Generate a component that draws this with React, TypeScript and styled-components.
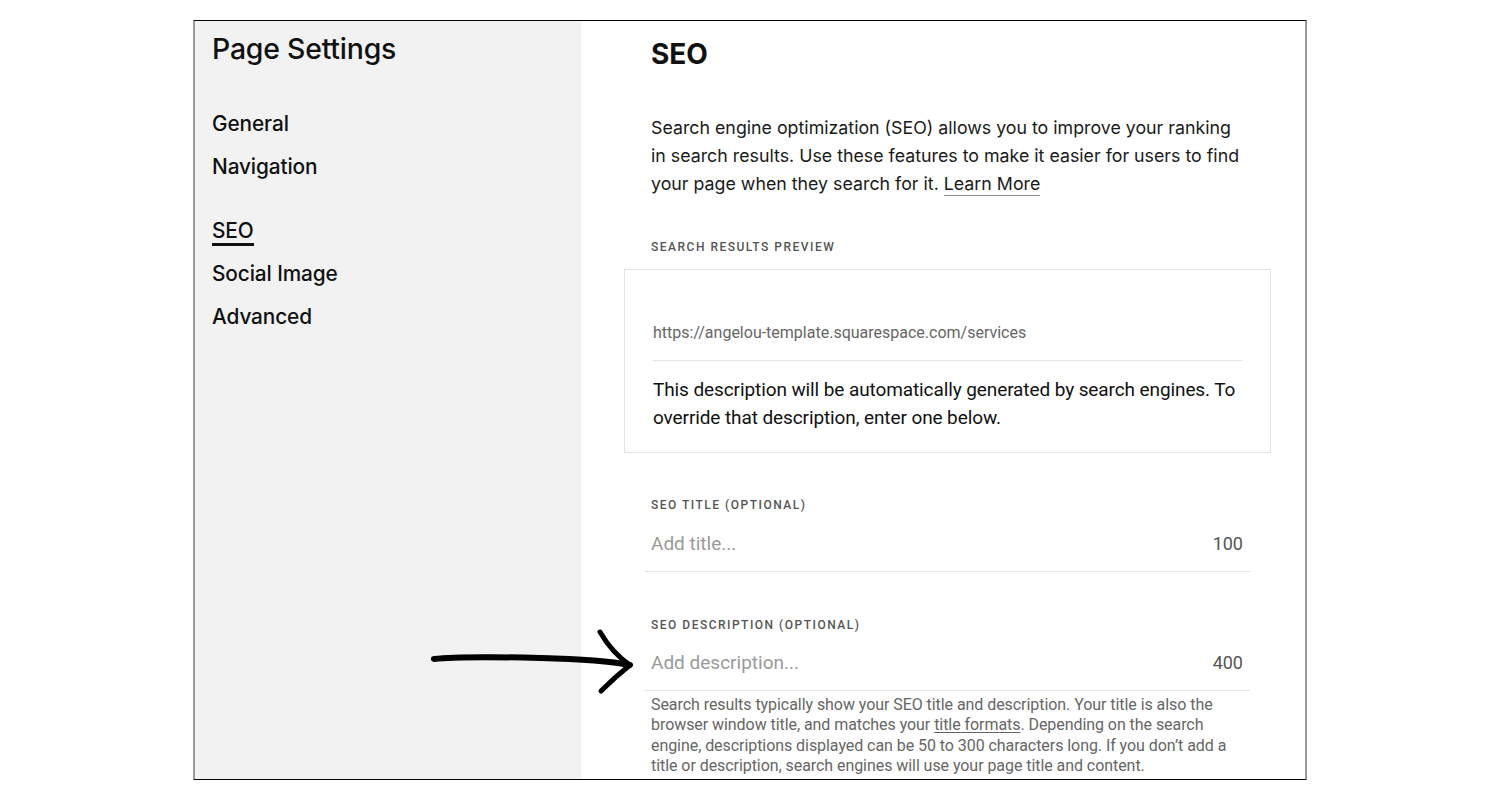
import styled, { createGlobalStyle } from "styled-components";

const GlobalStyle = createGlobalStyle`
  html, body {
    margin: 0;
    padding: 0;
    background: #ffffff;
  }
  body {
    font-family: "Inter", "Liberation Sans", sans-serif;
    color: #111;
  }
`;

const Page = styled.div`
  display: flex;
  padding: 20px 0 0 193px;
`;

const Frame = styled.div`
  position: relative;
  width: 1114px;
  height: 760px;
  box-sizing: border-box;
  border-top: 1px solid #000;
  border-bottom: 1px solid #000;
  border-left: 2px solid #9a9a9a;
  border-right: 2px solid #9a9a9a;
  display: flex;
  overflow: hidden;
`;

const Sidebar = styled.aside`
  width: 386px;
  flex: none;
  background: #f2f2f2;
  padding: 12px 0 0 17px;
  box-sizing: border-box;
`;

const SideTitle = styled.h1`
  margin: 0;
  font-size: 28.4px;
  line-height: 32px;
  font-weight: 500;
  letter-spacing: -0.2px;
`;

const NavList = styled.nav`
  margin-top: 37px;
  display: flex;
  flex-direction: column;
`;

const NavItem = styled.div<{ $gapBefore?: boolean }>`
  font-size: 20.8px;
  line-height: 43px;
  font-weight: 500;
  letter-spacing: -0.1px;
  margin-top: ${(p) => (p.$gapBefore ? "21px" : "0")};
`;

const ActiveLabel = styled.span`
  display: inline-block;
  line-height: 24px;
  border-bottom: 3px solid #111;
`;

const Main = styled.main`
  flex: 1;
  padding: 17px 0 0 70px;
  box-sizing: border-box;
`;

const Column = styled.div`
  width: 605px;
`;

const Heading = styled.h2`
  margin: 0;
  font-size: 28px;
  line-height: 32px;
  font-weight: 700;
`;

const Intro = styled.p`
  margin: 44px 0 0;
  font-size: 17.8px;
  line-height: 28px;
  color: #1a1a1a;
  width: 595px;
`;

const LearnMore = styled.a`
  color: inherit;
  text-decoration: none;
  border-bottom: 1px solid #8a8a8a;
  padding-bottom: 1px;
`;

const Label = styled.div<{ $top: number }>`
  margin-top: ${(p) => p.$top}px;
  font-family: "Roboto", "Liberation Sans", sans-serif;
  font-size: 12px;
  line-height: 16px;
  font-weight: 500;
  letter-spacing: 1.5px;
  color: #555;
`;

const PreviewBox = styled.div`
  margin: 14px 0 0 -27px;
  width: 647px;
  height: 184px;
  box-sizing: border-box;
  border: 1px solid #e3e3e3;
  padding: 53px 28px 0;
`;

const PreviewUrl = styled.div`
  font-family: "Roboto", "Liberation Sans", sans-serif;
  font-size: 16px;
  line-height: 20px;
  color: #666;
  padding-bottom: 17px;
  border-bottom: 1px solid #e6e6e6;
`;

const PreviewText = styled.div`
  margin-top: 15px;
  font-family: "Roboto", "Liberation Sans", sans-serif;
  font-size: 19px;
  line-height: 28px;
  letter-spacing: -0.1px;
  color: #111;
`;

const FieldRow = styled.div<{ $top: number }>`
  margin: ${(p) => p.$top}px 0 0 -6px;
  width: 605px;
  box-sizing: border-box;
  display: flex;
  justify-content: space-between;
  align-items: center;
  padding: 0 7px 13px 6px;
  border-bottom: 1px solid #e3e3e3;
  font-family: "Roboto", "Liberation Sans", sans-serif;
  font-size: 19px;
  line-height: 28px;
`;

const Placeholder = styled.span`
  color: #9a9a9a;
`;

const Counter = styled.span`
  color: #555;
  font-size: 18px;
`;

const HelpText = styled.p`
  margin: 4px 0 0;
  width: 600px;
  font-family: "Roboto", "Liberation Sans", sans-serif;
  font-size: 16px;
  line-height: 20.3px;
  letter-spacing: -0.06px;
  color: #666;
`;

const HelpLink = styled.a`
  color: inherit;
  text-decoration: underline;
  text-underline-offset: 2px;
`;

const ArrowMark = styled.svg`
  position: absolute;
  left: 235px;
  top: 607px;
  width: 215px;
  height: 70px;
  overflow: visible;
`;

const HandArrow = () => (
  <ArrowMark viewBox="0 0 215 70">
    <path
      d="M4 31 C 30 28, 70 29, 110 30 C 150 31, 180 33, 200 37"
      fill="none"
      stroke="#000"
      strokeWidth="6"
      strokeLinecap="round"
    />
    <path
      d="M3 31 C 40 27, 90 29, 130 30"
      fill="none"
      stroke="#000"
      strokeWidth="4"
      strokeLinecap="round"
    />
    <path
      d="M170 4 C 177 16, 188 29, 200 37"
      fill="none"
      stroke="#000"
      strokeWidth="5"
      strokeLinecap="round"
    />
    <path
      d="M200 37 C 190 45, 180 54, 171 63"
      fill="none"
      stroke="#000"
      strokeWidth="5"
      strokeLinecap="round"
    />
  </ArrowMark>
);

export default function App() {
  return (
    <>
      <GlobalStyle />
      <Page>
        <Frame>
          <Sidebar>
            <SideTitle>Page Settings</SideTitle>
            <NavList>
              <NavItem>General</NavItem>
              <NavItem>Navigation</NavItem>
              <NavItem $gapBefore>
                <ActiveLabel>SEO</ActiveLabel>
              </NavItem>
              <NavItem>Social Image</NavItem>
              <NavItem>Advanced</NavItem>
            </NavList>
          </Sidebar>
          <Main>
            <Column>
              <Heading>SEO</Heading>
              <Intro>
                Search engine optimization (SEO) allows you to improve your ranking in search
                results. Use these features to make it easier for users to find your page when
                they search for it. <LearnMore href="#">Learn More</LearnMore>
              </Intro>
              <Label $top={41}>SEARCH RESULTS PREVIEW</Label>
              <PreviewBox>
                <PreviewUrl>https://angelou-template.squarespace.com/services</PreviewUrl>
                <PreviewText>
                  This description will be automatically generated by search engines. To override
                  that description, enter one below.
                </PreviewText>
              </PreviewBox>
              <Label $top={44}>SEO TITLE (OPTIONAL)</Label>
              <FieldRow $top={17}>
                <Placeholder>Add title...</Placeholder>
                <Counter>100</Counter>
              </FieldRow>
              <Label $top={45}>SEO DESCRIPTION (OPTIONAL)</Label>
              <FieldRow $top={16}>
                <Placeholder>Add description...</Placeholder>
                <Counter>400</Counter>
              </FieldRow>
              <HelpText>
                Search results typically show your SEO title and description. Your title is also
                the browser window title, and matches your{" "}
                <HelpLink href="#">title formats</HelpLink>. Depending on the search engine,
                descriptions displayed can be 50 to 300 characters long. If you don’t add a title
                or description, search engines will use your page title and content.
              </HelpText>
            </Column>
          </Main>
          <HandArrow />
        </Frame>
      </Page>
    </>
  );
}
